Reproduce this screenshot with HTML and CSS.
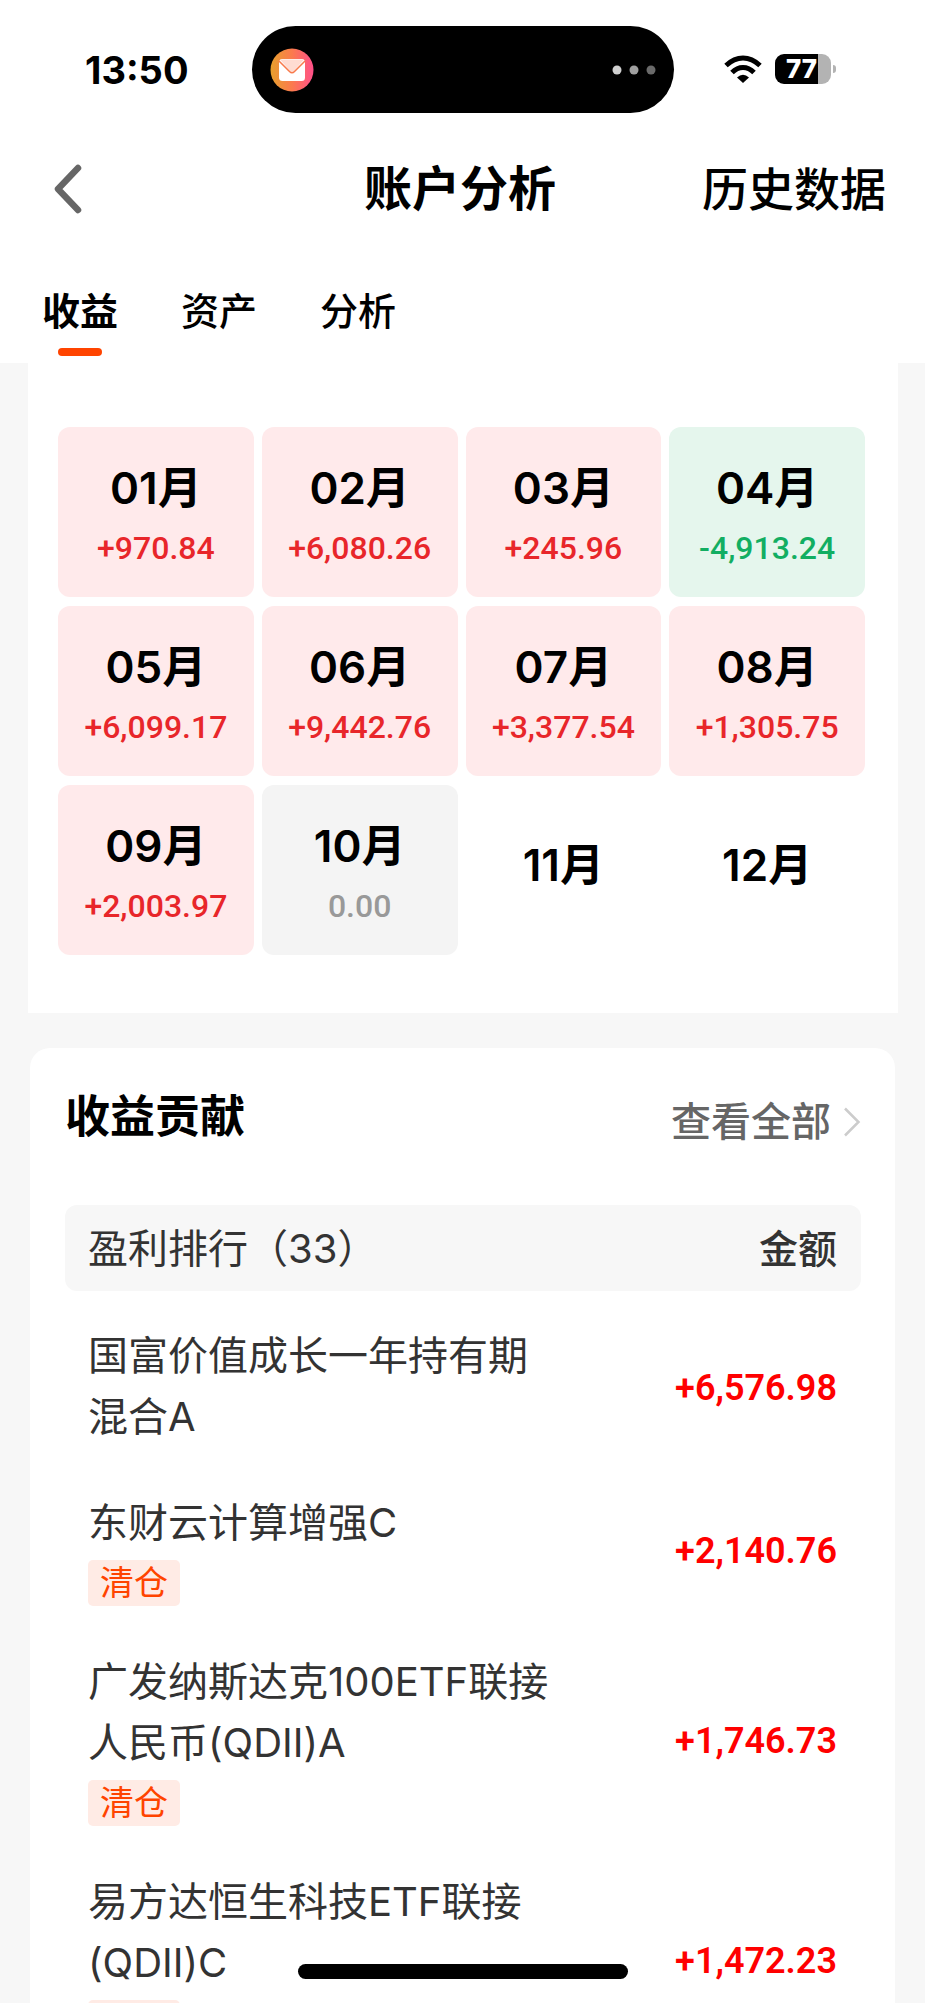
FILE: index.html
```html
<!DOCTYPE html>
<html lang="zh-CN">
<head>
<meta charset="utf-8">
<meta name="viewport" content="width=device-width, initial-scale=1">
<title>账户分析</title>
<link rel="stylesheet" href="styles.css">
</head>
<body>
<div class="app">
  <header class="header">
    <div class="status">
      <time class="clock">13:50</time>
      <div class="island">
        <svg class="mail" viewBox="0 0 44 44" aria-hidden="true">
          <defs><linearGradient id="mailBg" x1="0" x2="1" y1="0" y2="0"><stop offset="0" stop-color="#e8a02c"/><stop offset=".5" stop-color="#fb7a4e"/><stop offset="1" stop-color="#ff4f8a"/></linearGradient></defs>
          <circle cx="22" cy="22" r="21.5" fill="url(#mailBg)"/>
          <rect x="9" y="11" width="26" height="22" rx="3.5" fill="#fff"/>
          <path d="M10 11.500h24l-10 11.500q-2 2-4 0z" fill="#ffdcd2"/>
          <path d="M9 13l10.500 10.500q2.500 2.500 5 0L35 13" fill="none" stroke="#f87a4c" stroke-width="1.500"/>
        </svg>
        <svg class="dots" viewBox="0 0 44 10" aria-hidden="true"><circle cx="5" cy="5" r="4.500" fill="#d0d0d0"/><circle cx="22" cy="5" r="4.500" fill="#a0a0a0"/><circle cx="39" cy="5" r="4.500" fill="#6a6a6a"/></svg>
      </div>
      <div class="signals">
        <svg class="wifi" viewBox="0 0 38 28" aria-hidden="true">
          <g fill="none" stroke="#000" stroke-width="5"><path d="M2 10.500Q10 3 19 3t17 7.500"/><path d="M8 17.500Q13 12.500 19 12.500T30 17.500"/></g>
          <path d="M13 22.500Q19 17 25 22.500L19 28z"/>
        </svg>
        <div class="battery"><span class="battery-body">77</span><span class="battery-nub"></span></div>
      </div>
    </div>
    <div class="navbar">
      <button class="back" type="button" aria-label="返回"><svg viewBox="0 0 28 50" aria-hidden="true"><path d="M24 4L4 25l20 21" fill="none" stroke="#666" stroke-width="6.500" stroke-linecap="round" stroke-linejoin="round"/></svg></button>
      <h1 class="title">账户分析</h1>
      <a class="history" href="#">历史数据</a>
    </div>
    <nav class="tabs">
      <a class="tab tab-active" href="#">收益</a>
      <a class="tab" href="#">资产</a>
      <a class="tab" href="#">分析</a>
    </nav>
  </header>
  <main class="content">
    <section class="calendar">
      <div class="month gain"><span class="month-name">01月</span><span class="month-sum">+970.84</span></div>
      <div class="month gain"><span class="month-name">02月</span><span class="month-sum">+6,080.26</span></div>
      <div class="month gain"><span class="month-name">03月</span><span class="month-sum">+245.96</span></div>
      <div class="month loss"><span class="month-name">04月</span><span class="month-sum">-4,913.24</span></div>
      <div class="month gain"><span class="month-name">05月</span><span class="month-sum">+6,099.17</span></div>
      <div class="month gain"><span class="month-name">06月</span><span class="month-sum">+9,442.76</span></div>
      <div class="month gain"><span class="month-name">07月</span><span class="month-sum">+3,377.54</span></div>
      <div class="month gain"><span class="month-name">08月</span><span class="month-sum">+1,305.75</span></div>
      <div class="month gain"><span class="month-name">09月</span><span class="month-sum">+2,003.97</span></div>
      <div class="month flat"><span class="month-name">10月</span><span class="month-sum">0.00</span></div>
      <div class="month upcoming"><span class="month-name">11月</span></div>
      <div class="month upcoming"><span class="month-name">12月</span></div>
    </section>
    <section class="ranking">
      <div class="ranking-head">
        <h2 class="ranking-title">收益贡献</h2>
        <a class="more" href="#">查看全部<svg viewBox="0 0 18 30" aria-hidden="true"><path d="M2 1.500L15.500 15 2 28.500" fill="none" stroke="#ccc" stroke-width="2.500"/></svg></a>
      </div>
      <div class="columns"><span>盈利排行（33）</span><span class="columns-sum">金额</span></div>
      <ul class="funds">
        <li class="fund"><div class="fund-info"><span class="fund-name">国富价值成长一年持有期混合A</span></div><span class="fund-sum">+6,576.98</span></li>
        <li class="fund"><div class="fund-info"><span class="fund-name">东财云计算增强C</span><span class="tag">清仓</span></div><span class="fund-sum">+2,140.76</span></li>
        <li class="fund"><div class="fund-info"><span class="fund-name">广发纳斯达克100ETF联接人民币(QDII)A</span><span class="tag">清仓</span></div><span class="fund-sum">+1,746.73</span></li>
        <li class="fund"><div class="fund-info"><span class="fund-name">易方达恒生科技ETF联接(QDII)C</span><span class="tag tag-empty"></span></div><span class="fund-sum">+1,472.23</span></li>
      </ul>
    </section>
  </main>
  <div class="home-indicator"></div>
</div>
</body>
</html>
```

FILE: styles.css
```css
* {
  box-sizing: border-box;
}

body {
  margin: 0;
  font-family: Inter, "Noto Sans CJK SC", sans-serif;
  color: #000;
  background: #f7f7f7;
}

a {
  color: inherit;
  text-decoration: none;
}

.app {
  position: relative;
  display: flex;
  flex-direction: column;
  height: 100vh;
  overflow: hidden;
}

.header {
  flex: none;
  background: #fff;
}

/* Status bar */
.status {
  display: grid;
  grid-template-columns: 1fr 422px 1fr;
  align-items: center;
  padding: 26px 0;
}

.clock {
  padding-left: 85px;
  font-size: 38px;
  font-weight: 700;
  line-height: 44px;
}

.island {
  display: flex;
  align-items: center;
  justify-content: space-between;
  height: 87px;
  padding: 0 18px;
  border-radius: 44px;
  background: #000;
}

.mail {
  width: 44px;
  height: 44px;
}

.dots {
  width: 44px;
  height: 10px;
}

.signals {
  display: flex;
  align-items: center;
  gap: 13px;
  padding: 0 0 2px 50px;
}

.wifi {
  width: 38px;
  height: 28px;
}

.battery {
  display: flex;
  align-items: center;
  gap: 2px;
}

.battery-body {
  width: 56px;
  height: 30px;
  padding-right: 2px;
  border-radius: 9px;
  background: linear-gradient(to right, #000 43px, #b3b3b3 43px);
  color: #fff;
  font-size: 26px;
  font-weight: 800;
  line-height: 30px;
  text-align: center;
}

.battery-nub {
  width: 3px;
  height: 8px;
  border-radius: 0 4px 4px 0;
  background: #b3b3b3;
}

/* Navigation bar */
.navbar {
  display: grid;
  grid-template-columns: 1fr auto 1fr;
  align-items: center;
  height: 100px;
  padding: 0 39px 0 34px;
}

.back {
  justify-self: start;
  padding: 0 20px;
  border: 0;
  background: none;
}

.back svg {
  display: block;
  width: 28px;
  height: 50px;
}

.title {
  margin: 0;
  font-size: 48px;
  font-weight: 600;
  line-height: 64px;
}

.history {
  justify-self: end;
  font-size: 46px;
  font-weight: 500;
  line-height: 64px;
}

.tabs {
  display: flex;
  gap: 63px;
  padding: 47px 42px 7px;
}

.tab {
  display: flex;
  flex-direction: column;
  align-items: center;
  gap: 12px;
  font-size: 38px;
  font-weight: 500;
  line-height: 50px;
}

.tab::after {
  content: "";
  width: 44px;
  height: 8px;
  border-radius: 4px;
}

.tab-active {
  font-weight: 700;
}

.tab-active::after {
  background: #ff4400;
}

/* Monthly results */
.content {
  flex: 1;
  min-height: 0;
  overflow: hidden;
}

.calendar {
  display: grid;
  grid-template-columns: repeat(4, 1fr);
  grid-auto-rows: 170px;
  gap: 9px 8px;
  margin: 0 27px 35px 28px;
  padding: 64px 33px 58px 30px;
  background: #fff;
}

.month {
  display: flex;
  flex-direction: column;
  align-items: center;
  justify-content: center;
  gap: 6px;
  padding-top: 12px;
  border-radius: 12px;
}

.month-name {
  font-size: 44px;
  font-weight: 600;
  line-height: 54px;
}

.month-sum {
  font-family: Roboto, sans-serif;
  font-size: 32px;
  font-weight: 500;
  line-height: 54px;
}

.gain {
  background: #ffeaeb;
}

.gain .month-sum {
  color: #e8262a;
}

.loss {
  background: #e5f6ed;
}

.loss .month-sum {
  color: #12ae62;
}

.flat {
  background: #f4f4f4;
}

.flat .month-sum {
  color: #999;
}

.upcoming {
  padding: 0 0 10px;
}

/* Contribution ranking */
.ranking {
  margin: 0 30px;
  padding: 36px 34px 36px 35px;
  border-radius: 20px;
  background: #fff;
}

.ranking-head {
  display: flex;
  align-items: center;
  justify-content: space-between;
  padding-bottom: 55px;
}

.ranking-title {
  margin: 0;
  font-size: 45px;
  font-weight: 700;
  line-height: 64px;
}

.more {
  display: flex;
  align-items: center;
  gap: 12px;
  padding-top: 10px;
  color: #666;
  font-size: 40px;
  font-weight: 500;
  line-height: 56px;
}

.more svg {
  width: 18px;
  height: 30px;
}

.columns {
  display: flex;
  align-items: center;
  justify-content: space-between;
  height: 86px;
  padding: 0 24px 4px 23px;
  border-radius: 12px;
  background: #f7f7f7;
  color: #333;
  font-size: 40px;
}

.columns-sum {
  font-size: 39px;
  font-weight: 500;
}

.funds {
  display: flex;
  flex-direction: column;
  gap: 45px;
  margin: 0;
  padding: 34px 24px 0 23px;
  list-style: none;
}

.fund {
  display: flex;
  align-items: center;
  justify-content: space-between;
}

.fund-info {
  display: flex;
  flex-direction: column;
  align-items: flex-start;
  gap: 7px;
  width: 63%;
}

.fund-name {
  color: #333;
  font-size: 40px;
  line-height: 61px;
}

.tag {
  padding: 0 12px;
  border-radius: 5px;
  background: #ffebe5;
  color: #ff4400;
  font-size: 34px;
  line-height: 46px;
}

.tag-empty {
  width: 92px;
  height: 46px;
}

.fund-sum {
  padding-top: 4px;
  color: #ff0000;
  font-family: Roboto, sans-serif;
  font-size: 36px;
  font-weight: 600;
}

.home-indicator {
  position: absolute;
  bottom: 24px;
  left: 50%;
  width: 330px;
  height: 15px;
  margin-left: -165px;
  border-radius: 8px;
  background: #000;
}
```
